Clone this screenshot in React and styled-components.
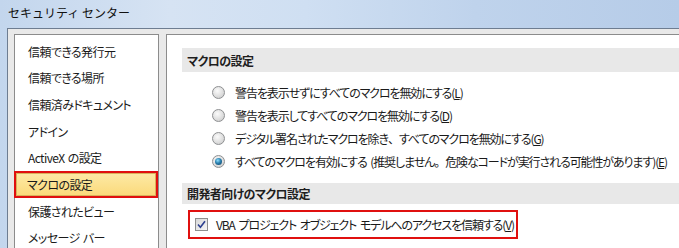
import React from "react";
import styled, { createGlobalStyle } from "styled-components";

const GlobalStyle = createGlobalStyle`
  html, body {
    margin: 0;
    padding: 0;
    overflow: hidden;
  }
  body {
    font-family: "Noto Sans CJK JP", "Noto Sans", sans-serif;
    color: #000;
  }
`;

const navItems = [
  "信頼できる発行元",
  "信頼できる場所",
  "信頼済みドキュメント",
  "アドイン",
  "ActiveX の設定",
  "マクロの設定",
  "保護されたビュー",
  "メッセージ バー",
];

const macroOptions = [
  { text: "警告を表示せずにすべてのマクロを無効にする", key: "L" },
  { text: "警告を表示してすべてのマクロを無効にする", key: "D" },
  { text: "デジタル署名されたマクロを除き、すべてのマクロを無効にする", key: "G" },
  {
    text: "すべてのマクロを有効にする (推奨しません。危険なコードが実行される可能性があります)",
    key: "E",
    checked: true,
  },
];

// keep 、 and 。 full width like the dialog font does
const withPunct = (text) =>
  text.split(/([、。])/).map((part, i) =>
    part === "、" || part === "。" ? <Punct key={i}>{part}</Punct> : part
  );

const App = () => {
  return (
    <>
      <GlobalStyle />
      <Window>
        <TitleBar>セキュリティ センター</TitleBar>
        <Client>
          <NavPanel>
            {navItems.map((item) =>
              item === "マクロの設定" ? (
                <SelectedItem key={item}>
                  <SelectedInner>{item}</SelectedInner>
                </SelectedItem>
              ) : (
                <NavItem key={item}>{item}</NavItem>
              )
            )}
          </NavPanel>
          <ContentPanel>
            <SectionHeader>マクロの設定</SectionHeader>
            <RadioList>
              {macroOptions.map((opt) => (
                <RadioRow key={opt.key}>
                  <Radio $checked={opt.checked} />
                  <span>
                    {withPunct(opt.text)}(<u>{opt.key}</u>)
                  </span>
                </RadioRow>
              ))}
            </RadioList>
            <SectionHeader $second>開発者向けのマクロ設定</SectionHeader>
            <TrustBox>
              <CheckBox>
                <svg width="9" height="9" viewBox="0 0 9 9">
                  <path
                    d="M1 4.5 L3.4 7.2 L8 1.2"
                    fill="none"
                    stroke="#2c3f8f"
                    strokeWidth="1.6"
                  />
                </svg>
              </CheckBox>
              <span>
                VBA プロジェクト オブジェクト モデルへのアクセスを信頼する(<u>V</u>)
              </span>
            </TrustBox>
          </ContentPanel>
        </Client>
      </Window>
    </>
  );
};

export default App;

const Window = styled.div`
  width: 679px;
  height: 248px;
  display: flex;
  flex-direction: column;
  background: linear-gradient(
    90deg,
    #c3d6ed 0%,
    #d6e3f3 25%,
    #cfdff2 45%,
    #bfd3ec 70%,
    #b6cce8 100%
  );
  overflow: hidden;
`;

const TitleBar = styled.div`
  height: 28px;
  flex-shrink: 0;
  display: flex;
  align-items: center;
  padding: 0 0 3px 8px;
  box-sizing: border-box;
  font-size: 12px;
  color: #111;
`;

const Client = styled.div`
  flex: 1;
  margin-left: 7px;
  border-top: 1px solid #6e7d91;
  border-left: 1px solid #6e7d91;
  background: #e9e9e9;
  display: flex;
  gap: 7px;
  padding: 5px 0 0 6px;
  min-height: 0;
  font-feature-settings: "palt" 1;
`;

const NavPanel = styled.div`
  width: 145px;
  flex-shrink: 0;
  box-sizing: border-box;
  background: #fff;
  border: 1px solid #8c8c8c;
  border-bottom: none;
  padding-top: 3px;
  font-size: 12px;
  letter-spacing: -0.6px;
  word-spacing: 1px;
`;

const NavItem = styled.div`
  height: 26.67px;
  display: flex;
  align-items: center;
  padding-left: 13px;
  color: #1a1a1a;
`;

const SelectedItem = styled.div`
  height: 26.67px;
  margin-left: -1px;
  box-sizing: border-box;
  border: 2px solid #e0100f;
  display: flex;
`;

const SelectedInner = styled.div`
  flex: 1;
  display: flex;
  align-items: center;
  padding-left: 10px;
  border: 1px solid #d8b25a;
  background: linear-gradient(#fde9a4, #fbda7c);
  color: #1a1a1a;
`;

const ContentPanel = styled.div`
  flex: 1;
  background: #fff;
  border-top: 1px solid #8c8c8c;
  border-left: 1px solid #8c8c8c;
  padding: 13px 0 0 15px;
  font-size: 12px;
  letter-spacing: -1.1px;
  word-spacing: 2px;
  display: flex;
  flex-direction: column;
`;

const Punct = styled.span`
  font-feature-settings: normal;
`;

const SectionHeader = styled.div`
  height: ${(p) => (p.$second ? "21px" : "24px")};
  margin-top: ${(p) => (p.$second ? "10px" : "0")};
  background: #e8e8e8;
  display: flex;
  align-items: center;
  padding-left: 5px;
  font-weight: 700;
  letter-spacing: -0.6px;
  color: #1e1e1e;
`;

const RadioList = styled.div`
  display: flex;
  flex-direction: column;
  padding: 9px 0 0 30px;
`;

const RadioRow = styled.div`
  height: 23px;
  display: flex;
  align-items: center;
  gap: 10px;
  color: #1a1a1a;
  white-space: nowrap;
`;

const Radio = styled.span`
  width: 13px;
  height: 13px;
  flex-shrink: 0;
  box-sizing: border-box;
  border-radius: 50%;
  border: 1px solid #8e9092;
  background: radial-gradient(circle at 40% 35%, #fbfbfb 0%, #dcdcdc 60%, #c4c4c4 100%);
  display: flex;
  align-items: center;
  justify-content: center;

  &::after {
    content: "";
    display: ${(p) => (p.$checked ? "block" : "none")};
    width: 7px;
    height: 7px;
    border-radius: 50%;
    background: radial-gradient(circle at 40% 35%, #8fe0ff 0%, #2a7fae 45%, #0d3b5c 100%);
  }
`;

const TrustBox = styled.div`
  margin: 6px 0 0 6px;
  width: 330px;
  height: 29px;
  box-sizing: border-box;
  border: 2px solid #e0100f;
  display: flex;
  align-items: center;
  padding-left: 5px;
  gap: 8px;
  color: #1a1a1a;
  white-space: nowrap;
`;

const CheckBox = styled.span`
  width: 13px;
  height: 13px;
  flex-shrink: 0;
  box-sizing: border-box;
  border: 1px solid #8e8f8f;
  background: linear-gradient(135deg, #d8d8d8, #f6f6f6);
  display: flex;
  align-items: center;
  justify-content: center;
`;
